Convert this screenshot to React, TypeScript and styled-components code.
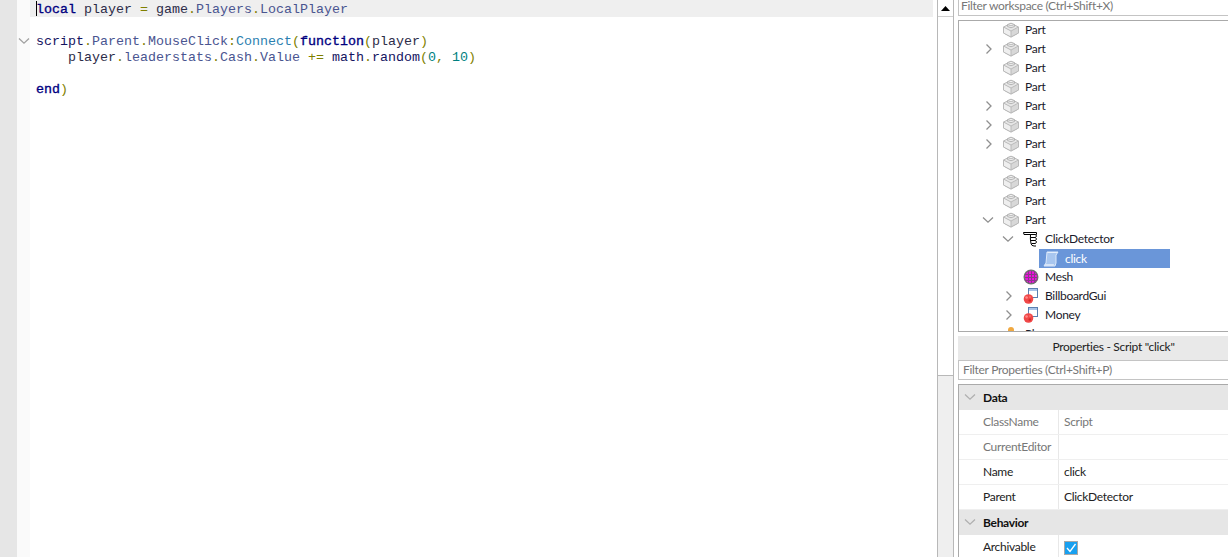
import React from "react";
import styled, { createGlobalStyle } from "styled-components";

const Global = createGlobalStyle`
  html, body { margin: 0; padding: 0; background: #fff; overflow: hidden; }
  #root { width: 1228px; height: 557px; }
`;

const Page = styled.div`
  width: 1228px; height: 557px; display: grid;
  grid-template-columns: 937px 17px 1fr; overflow: hidden;
  font-family: "Lato", "Noto Sans", sans-serif; font-size: 12px; letter-spacing: -0.3px; color: #222;
`;
const Editor = styled.div`display: grid; grid-template-columns: 17px 13px 1fr; height: 557px;`;
const Gutter = styled.div`background: #e6e6e6;`;
const FoldMargin = styled.div`background: #fafafa; padding-top: 33px; padding-left: 1px;`;
const Code = styled.div`
  padding: 0 4px 0 0;
  font-family: "Liberation Mono", monospace; font-size: 13.33px; line-height: 16px; letter-spacing: 0;
  background: #fff;
`;
const CodeLine = styled.div<{ $active?: boolean }>`
  height: 16px; white-space: pre; padding-left: 6px; position: relative; line-height: 18px;
  ${p => p.$active ? `background: #efefef; height: 17px; line-height: 20px;` : ""}
`;
const Caret = styled.span`position: absolute; left: 6px; top: 1px; width: 1px; height: 15px; background: #000;`;
const Kw = styled.span`color: #00007f; -webkit-text-stroke: 0.35px #00007f;`;
const Id = styled.span`color: #2c2c48;`;
const Prop = styled.span`color: #4a5590;`;
const Fn = styled.span`color: #2a7fb0;`;
const Lib = styled.span`color: #14145f;`;
const Op = styled.span`color: #7f7f00;`;
const Num = styled.span`color: #007f7f;`;

const ScrollBar = styled.div`
  display: flex; flex-direction: column; height: 557px;
  border-left: 1px solid #b8b8b8; border-right: 1px solid #b8b8b8; box-sizing: border-box;
`;
const ScrollBtn = styled.div`height: 16px; display: flex; align-items: center; justify-content: center; background: #fff; border-bottom: 1px solid #d0d0d0;`;
const ScrollThumb = styled.div`height: 358px; background: #fff; border-bottom: 1px solid #b8b8b8;`;
const ScrollTrack = styled.div`flex: 1; background: #efefef;`;

const Side = styled.div`display: flex; flex-direction: column; padding-left: 4px; height: 557px; overflow: hidden;`;
const Filter = styled.div<{ $h: number }>`
  flex: none; height: ${p => p.$h}px; box-sizing: border-box; border: 1px solid #c4c4c4; border-right: none;
  background: #fff; color: #777; padding: 0 0 2px 4px; display: flex; align-items: center;
  white-space: nowrap;
`;
const TopFilter = styled(Filter)`border-top: none; padding-left: 2px; padding-bottom: 5px;`;
const Tree = styled.div`
  flex: none; height: 312px; margin-top: 4px; box-sizing: border-box; overflow: hidden;
  border: 1px solid #aaa; border-right: none; background: #fff;
`;
const Row = styled.div<{ $depth: number }>`
  height: 19px; box-sizing: border-box; padding-bottom: 2px; display: flex; align-items: center;
  padding-left: ${p => 26 + p.$depth * 20}px; color: #1a1a2a;
`;
const Chev = styled.span`width: 18px; flex: none; display: flex; align-items: center;`;
const ChevDown = styled.span`display: flex; margin-left: -3px;`;
const IconSlot = styled.span`width: 16px; height: 16px; flex: none; display: block; margin-right: 6px;`;
const Label = styled.span<{ $sel?: boolean }>`
  white-space: nowrap;
  ${p => p.$sel ? `color:#fff;` : ""}
`;
const Sel = styled.div`
  display: flex; align-items: center; align-self: flex-start; background: #6a96d9; width: 131px; height: 19px;
  margin-left: -4px; padding-left: 4px; box-sizing: border-box; flex: none;
`;
const PropsHeader = styled.div`
  flex: none; height: 24px; margin-top: 4px; background: #e9e9e9; display: flex; align-items: center; justify-content: center;
  color: #222; padding: 0 0 3px 41px; box-sizing: border-box;
`;
const Table = styled.div`
  flex: 1; margin-top: 4px; border-top: 1px solid #aaa; border-left: 1px solid #aaa; overflow: hidden;
`;
const Group = styled.div`
  height: 25px; box-sizing: border-box; background: #e6e6e6; display: flex; align-items: center;
  font-weight: 700; color: #111; padding: 0 0 1px 5px; gap: 7px;
`;
const PRow = styled.div`
  height: 25px; box-sizing: border-box; display: grid; grid-template-columns: 100px 1fr;
  border-bottom: 1px solid #efefef;
`;
const PName = styled.div<{ $dim?: boolean }>`
  padding: 0 0 1px 24px; display: flex; align-items: center; border-right: 1px solid #e8e8e8;
  color: ${p => p.$dim ? "#777" : "#222"};
`;
const PVal = styled.div<{ $dim?: boolean }>`
  padding: 0 0 1px 5px; display: flex; align-items: center; color: ${p => p.$dim ? "#777" : "#222"};
`;
const Check = styled.span`
  width: 14px; height: 14px; box-sizing: border-box; background: #18a0f0; border: 1px solid #a8a8a8;
  display: flex; align-items: center; justify-content: center; margin-top: 3px;
`;

const ChevR = () => (
  <svg width="8" height="12" viewBox="0 0 8 12"><path d="M1.5 1.5 L6 6 L1.5 10.5" fill="none" stroke="#8f8f8f" strokeWidth="1.3" /></svg>
);
const ChevD = ({ c = "#8f8f8f" }: { c?: string }) => (
  <svg width="12" height="8" viewBox="0 0 12 8"><path d="M1 1.5 L6 6.2 L11 1.5" fill="none" stroke={c} strokeWidth="1.3" /></svg>
);
const PartIcon = () => (
  <svg width="16" height="16" viewBox="0 0 16 16" style={{ display: "block" }}>
    <path d="M0.5 5 L4.5 3 H11.5 L15.5 5 V11 L8 15 L0.5 11 Z" fill="#e6e6e6" stroke="#bababa" />
    <path d="M8 9 L15.5 5.5 V11 L8 15 Z" fill="#d8d8d8" />
    <path d="M0.5 5.5 L8 9 V15 L0.5 11 Z" fill="#efefef" />
    <path d="M4.5 2.6 Q8 -0.2 11.5 2.6 V4.5 Q8 7 4.5 4.5 Z" fill="#f0f0f0" stroke="#b4b4b4" />
    <path d="M4.5 2.6 Q8 5 11.5 2.6" fill="none" stroke="#bcbcbc" />
    <path d="M0.5 5 L8 9 L15.5 5 V11 L8 15 L0.5 11 Z M8 9 V15" fill="none" stroke="#bababa" />
  </svg>
);
const HandIcon = () => (
  <svg width="16" height="16" viewBox="0 0 16 16" style={{ display: "block" }}>
    <path d="M0.5 1.5 H13.5 V3.5 H5 L1 3.5 Z" fill="#fff" stroke="#000" />
    <path d="M7.5 3.5 H12.5 Q14.5 5 12.5 6.5 H8 M12.5 6.5 Q14.5 8 12.5 9.5 H8 M12.5 9.5 Q14.5 11 12.5 12.5 H8.5" fill="#fff" stroke="#000" />
    <path d="M7.5 3.5 Q7 8 8 12.5 Q8.5 15 11 15 H13" fill="none" stroke="#000" />
  </svg>
);
const ScriptIcon = () => (
  <svg width="16" height="16" viewBox="0 0 16 16" style={{ display: "block" }}>
    <path d="M4 1 H15 L13 4 V12 L12 15 H1 L3 12 Z" fill="#a8c6ef" stroke="#dbe8fa" />
    <path d="M4 1 H15 L13.5 2 H5 Z" fill="#e4eefb" />
    <path d="M2 13 H11 L10.5 15 H1 Z" fill="#d6e4f8" />
  </svg>
);
const MeshIcon = () => (
  <svg width="16" height="16" viewBox="0 0 16 16" style={{ display: "block" }}>
    <circle cx="8" cy="8" r="7.5" fill="#707070" />
    <circle cx="8" cy="8" r="6" fill="#f010e0" />
    <path d="M2 5.5 H14 M2 8.5 H14 M2 11.5 H14 M5.5 2 V14 M8.5 2 V14 M11.5 2 V14" stroke="#8a3a8a" strokeWidth="1" />
  </svg>
);
const GuiIcon = () => (
  <svg width="16" height="16" viewBox="0 0 16 16" style={{ display: "block" }}>
    <rect x="5.5" y="0.5" width="9" height="9" fill="#fff" stroke="#5a7fb0" />
    <rect x="6" y="1" width="8" height="2" fill="#a8c4e8" />
    <circle cx="5.5" cy="11" r="4.8" fill="#f04848" />
    <circle cx="3.6" cy="9.5" r="1.3" fill="#ff8a8a" />
    <circle cx="6.8" cy="12.5" r="1.3" fill="#d42a2a" />
    <circle cx="7" cy="9" r="1" fill="#ff6a6a" />
  </svg>
);
const PlayersIcon = () => (
  <svg width="16" height="16" viewBox="0 0 16 16" style={{ display: "block" }}>
    <circle cx="8" cy="4" r="3" fill="#f0a840" />
    <path d="M3 16 Q3 8 8 8 Q13 8 13 16 Z" fill="#f0c080" />
  </svg>
);

type Node = { d: number; label: string; chev?: "r" | "d"; icon: React.ReactNode; sel?: boolean };
const part = <PartIcon />;
const nodes: Node[] = [
  { d: 0, label: "Part", icon: part },
  { d: 0, label: "Part", chev: "r", icon: part },
  { d: 0, label: "Part", icon: part },
  { d: 0, label: "Part", icon: part },
  { d: 0, label: "Part", chev: "r", icon: part },
  { d: 0, label: "Part", chev: "r", icon: part },
  { d: 0, label: "Part", chev: "r", icon: part },
  { d: 0, label: "Part", icon: part },
  { d: 0, label: "Part", icon: part },
  { d: 0, label: "Part", icon: part },
  { d: 0, label: "Part", chev: "d", icon: part },
  { d: 1, label: "ClickDetector", chev: "d", icon: <HandIcon /> },
  { d: 2, label: "click", icon: <ScriptIcon />, sel: true },
  { d: 1, label: "Mesh", icon: <MeshIcon /> },
  { d: 1, label: "BillboardGui", chev: "r", icon: <GuiIcon /> },
  { d: 1, label: "Money", chev: "r", icon: <GuiIcon /> },
  { d: 0, label: "Players", icon: <PlayersIcon /> },
];

export default function App() {
  return (
    <Page>
      <Global />
      <Editor>
        <Gutter />
        <FoldMargin><ChevD c="#a0a0a0" /></FoldMargin>
        <Code>
          <CodeLine $active><Caret /><Kw>local</Kw> <Id>player</Id> <Op>=</Op> <Id>game</Id><Op>.</Op><Prop>Players</Prop><Op>.</Op><Prop>LocalPlayer</Prop></CodeLine>
          <CodeLine> </CodeLine>
          <CodeLine><Lib>script</Lib><Op>.</Op><Prop>Parent</Prop><Op>.</Op><Prop>MouseClick</Prop><Op>:</Op><Fn>Connect</Fn><Op>(</Op><Kw>function</Kw><Op>(</Op><Id>player</Id><Op>)</Op></CodeLine>
          <CodeLine>{"    "}<Id>player</Id><Op>.</Op><Prop>leaderstats</Prop><Op>.</Op><Prop>Cash</Prop><Op>.</Op><Prop>Value</Prop> <Op>+=</Op> <Lib>math</Lib><Op>.</Op><Lib>random</Lib><Op>(</Op><Num>0</Num><Op>,</Op> <Num>10</Num><Op>)</Op></CodeLine>
          <CodeLine> </CodeLine>
          <CodeLine><Kw>end</Kw><Op>)</Op></CodeLine>
        </Code>
      </Editor>
      <ScrollBar>
        <ScrollBtn>
          <svg width="9" height="5" viewBox="0 0 9 5"><path d="M4.5 0 L9 5 H0 Z" fill="#000" /></svg>
        </ScrollBtn>
        <ScrollThumb />
        <ScrollTrack />
      </ScrollBar>
      <Side>
        <TopFilter $h={16}>Filter workspace (Ctrl+Shift+X)</TopFilter>
        <Tree>
          {nodes.map((n, i) => (
            <Row key={i} $depth={n.d}>
              <Chev>{n.chev === "r" ? <ChevR /> : n.chev === "d" ? <ChevDown><ChevD /></ChevDown> : null}</Chev>
              {n.sel ? (
                <Sel>
                  <IconSlot>{n.icon}</IconSlot>
                  <Label $sel>{n.label}</Label>
                </Sel>
              ) : (
                <>
                  <IconSlot>{n.icon}</IconSlot>
                  <Label>{n.label}</Label>
                </>
              )}
            </Row>
          ))}
        </Tree>
        <PropsHeader>Properties - Script "click"</PropsHeader>
        <Filter $h={20}>Filter Properties (Ctrl+Shift+P)</Filter>
        <Table>
          <Group><ChevD c="#b0b0b0" />Data</Group>
          <PRow><PName $dim>ClassName</PName><PVal $dim>Script</PVal></PRow>
          <PRow><PName $dim>CurrentEditor</PName><PVal /></PRow>
          <PRow><PName>Name</PName><PVal>click</PVal></PRow>
          <PRow><PName>Parent</PName><PVal>ClickDetector</PVal></PRow>
          <Group><ChevD c="#b0b0b0" />Behavior</Group>
          <PRow>
            <PName>Archivable</PName>
            <PVal>
              <Check>
                <svg width="12" height="12" viewBox="0 0 12 12"><path d="M2 6 L5 9.5 L10.5 2" fill="none" stroke="#fff" strokeWidth="1.3" /></svg>
              </Check>
            </PVal>
          </PRow>
        </Table>
      </Side>
    </Page>
  );
}
